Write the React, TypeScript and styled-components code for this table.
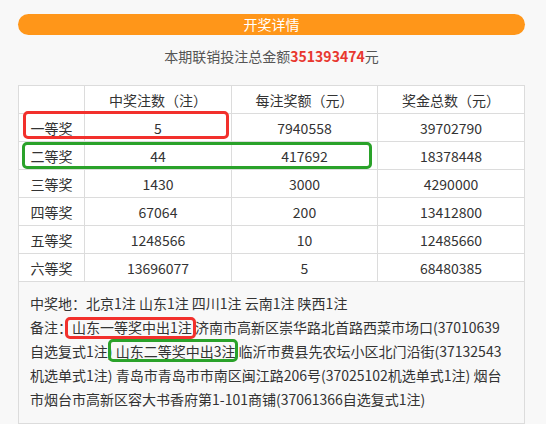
import React from "react";
import styled, { createGlobalStyle } from "styled-components";

const GlobalStyle = createGlobalStyle`
  body {
    margin: 0;
    background: #f8f8f8;
    font-family: "Microsoft YaHei", "Noto Sans CJK SC", "Noto Sans", sans-serif;
    color: #333;
  }
`;

interface IPrize {
  level: string;
  count: string;
  each: string;
  total: string;
}

const prizes: IPrize[] = [
  { level: "一等奖", count: "5", each: "7940558", total: "39702790" },
  { level: "二等奖", count: "44", each: "417692", total: "18378448" },
  { level: "三等奖", count: "1430", each: "3000", total: "4290000" },
  { level: "四等奖", count: "67064", each: "200", total: "13412800" },
  { level: "五等奖", count: "1248566", each: "10", total: "12485660" },
  { level: "六等奖", count: "13696077", each: "5", total: "68480385" },
];

const RED = "#f2302c";
const GREEN = "#2aa22a";

export default function App() {
  return (
    <>
      <GlobalStyle />
      <Page>
        <TitleBar>开奖详情</TitleBar>
        <Summary>
          本期联销投注总金额<Amount>351393474</Amount>元
        </Summary>
        <TableWrap>
          <Table>
            <colgroup>
              <col style={{ width: 66 }} />
              <col style={{ width: 147 }} />
              <col style={{ width: 146 }} />
              <col />
            </colgroup>
            <thead>
              <tr>
                <Cell as="th"></Cell>
                <Cell as="th">中奖注数（注）</Cell>
                <Cell as="th">每注奖额（元）</Cell>
                <Cell as="th">奖金总数（元）</Cell>
              </tr>
            </thead>
            <tbody>
              {prizes.map((p) => (
                <tr key={p.level}>
                  <Cell>{p.level}</Cell>
                  <Cell>{p.count}</Cell>
                  <Cell>{p.each}</Cell>
                  <Cell>{p.total}</Cell>
                </tr>
              ))}
            </tbody>
          </Table>
          <Mark $color={RED} $left={5} $top={26} $width={206} $height={28} />
          <Mark $color={GREEN} $left={4} $top={57} $width={350} $height={27} />
        </TableWrap>
        <Notes>
          <p>中奖地：北京1注 山东1注 四川1注 云南1注 陕西1注</p>
          <p>
            备注：山东一等奖中出1注 济南市高新区崇华路北首路西菜市场口(37010639自选复式1注)
            山东二等奖中出3注 临沂市费县先农坛小区北门沿街(37132543机选单式1注)
            青岛市青岛市市南区闽江路206号(37025102机选单式1注)
            烟台市烟台市高新区容大书香府第1-101商铺(37061366自选复式1注)
          </p>
          <Mark $color={RED} $left={46} $top={35} $width={131} $height={22} />
          <Mark $color={GREEN} $left={89} $top={57} $width={130} $height={23} />
        </Notes>
      </Page>
    </>
  );
}

const Page = styled.div`
  padding: 14px 21px 0 18px;
  min-height: 424px;
  box-sizing: border-box;
  display: flex;
  flex-direction: column;
`;

const TitleBar = styled.div`
  height: 21px;
  line-height: 21px;
  border-radius: 11px;
  background: #ff9619;
  color: #fff;
  text-align: center;
  font-size: 14px;
`;

const Summary = styled.div`
  margin-top: 11px;
  text-align: center;
  font-size: 14px;
  line-height: 20px;
  color: #555;
`;

const Amount = styled.span`
  color: #e8372f;
  font-weight: bold;
`;

const TableWrap = styled.div`
  position: relative;
  margin-top: 19px;
`;

const Table = styled.table`
  width: 100%;
  border-collapse: collapse;
  table-layout: fixed;
  background: #fff;
  font-size: 14px;
`;

const Cell = styled.td`
  border: 1px solid #dcdcdc;
  height: 27px;
  padding: 0;
  text-align: center;
  font-weight: normal;
  color: #333;
`;

const Mark = styled.div<{
  $color: string;
  $left: number;
  $top: number;
  $width: number;
  $height: number;
}>`
  position: absolute;
  left: ${(p) => p.$left}px;
  top: ${(p) => p.$top}px;
  width: ${(p) => p.$width}px;
  height: ${(p) => p.$height}px;
  box-sizing: border-box;
  border: 3px solid ${(p) => p.$color};
  border-radius: 5px;
  pointer-events: none;
`;

const Notes = styled.div`
  position: relative;
  flex: 1;
  border: 1px solid #dcdcdc;
  border-top: none;
  padding: 9px 14px 0 11px;
  font-size: 14px;
  line-height: 24px;

  p {
    margin: 0;
  }
`;
